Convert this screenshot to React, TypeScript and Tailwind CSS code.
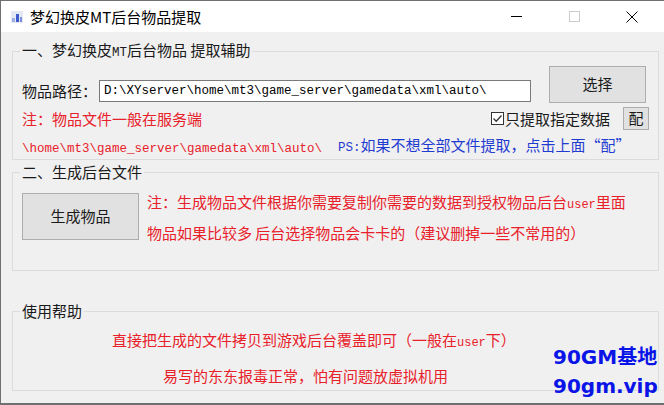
import React from "react";

const mono = "font-['Liberation_Mono','Noto_Sans_CJK_SC',monospace]";

function TitleIcon() {
  return (
    <svg width="12" height="12" viewBox="0 0 12 12">
      <rect x="0" y="0" width="12" height="12" fill="#e4e8f4" />
      <rect x="1" y="7" width="3" height="4" fill="#9fb0e0" />
      <rect x="5" y="3" width="3" height="8" fill="#3d5bd0" />
      <rect x="9" y="6" width="2" height="5" fill="#7a8fd8" />
    </svg>
  );
}

function CheckBox() {
  return (
    <svg width="13" height="13" viewBox="0 0 13 13">
      <rect x="0.5" y="0.5" width="12" height="12" fill="#ffffff" stroke="#333333" />
      <path d="M2.5 6.5 L5.2 9.2 L10.5 3.5" fill="none" stroke="#333333" strokeWidth="1.3" />
    </svg>
  );
}

export default function App() {
  const red = "text-[#e8202a]";
  return (
    <div className="relative w-[664px] h-[405px] overflow-hidden bg-[#f0f0f0] border-l border-t border-b-2 border-[#707070] font-['Noto_Sans_CJK_SC',sans-serif] text-[15px] text-[#1a1a1a] flex flex-col">
      {/* title bar */}
      <div className="h-[31px] bg-white flex items-center pl-[10px] pr-[3px] shrink-0">
        <TitleIcon />
        <span className="ml-[7px] leading-[20px] text-[15px] text-black">梦幻换皮MT后台物品提取</span>
        <div className="ml-auto flex h-full">
          <div className="w-[58px] h-full flex items-center justify-center">
            <div className="w-[11px] h-px bg-black" />
          </div>
          <div className="w-[58px] h-full flex items-center justify-center">
            <div className="w-[11px] h-[11px] border border-[#cccccc]" />
          </div>
          <div className="w-[58px] h-full flex items-center justify-center">
            <svg width="12" height="12" viewBox="0 0 12 12">
              <path d="M0.5 0.5 L11.5 11.5 M11.5 0.5 L0.5 11.5" stroke="#000" strokeWidth="1" />
            </svg>
          </div>
        </div>
      </div>

      {/* body */}
      <div className="flex flex-col pl-[11px]">
        {/* group 1 */}
        <fieldset className="mt-[8px] w-[647px] h-[120px] border border-[#dcdcdc] pl-[7px] pr-[12px]">
          <legend className="px-[2px] leading-[20px]">
            一、梦幻换皮<span className={`${mono} text-[12.5px]`}>MT</span>后台物品 提取辅助
          </legend>
          <div className="flex items-start mt-[3px] h-[37px]">
            <div className="flex items-center mt-[14px] ml-[2px]">
              <span className="leading-[22px] whitespace-nowrap">物品路径：</span>
              <div className={`ml-[2px] w-[432px] h-[22px] border border-[#7a7a7a] bg-white pl-[4px] leading-[20px] text-[12.5px] text-black ${mono} whitespace-nowrap overflow-hidden`}>
                D:\XYserver\home\mt3\game_server\gamedata\xml\auto\
              </div>
            </div>
            <div className="ml-auto w-[97px] h-[37px] border border-[#adadad] bg-[#e1e1e1] flex items-center justify-center">
              选择
            </div>
          </div>
          <div className="flex items-center mt-[4px] h-[23px]">
            <span className={`ml-[2px] leading-[20px] whitespace-nowrap ${red}`}>注：物品文件一般在服务端</span>
            <div className="ml-auto mr-[-3px] flex items-center">
              <CheckBox />
              <span className="ml-[1px] leading-[20px] whitespace-nowrap">只提取指定数据</span>
              <div className="ml-[13px] w-[26px] h-[23px] border border-[#adadad] bg-[#e1e1e1] flex items-center justify-center">
                配
              </div>
            </div>
          </div>
          <div className="flex items-start mt-[7px]">
            <span className={`ml-[2px] mt-[2px] w-[316px] leading-[20px] text-[12.5px] whitespace-nowrap ${mono} ${red}`}>
              \home\mt3\game_server\gamedata\xml\auto\
            </span>
            <span className="mt-[-2px] leading-[20px] whitespace-nowrap text-[#1f3bd0]">
              <span className={`${mono} text-[12.5px]`}>PS:</span>如果不想全部文件提取，点击上面“配”
            </span>
          </div>
        </fieldset>

        {/* group 2 */}
        <fieldset className="mt-[2px] w-[647px] h-[109px] border border-[#dcdcdc] pl-[7px] pr-[12px]">
          <legend className="px-[2px] leading-[20px]">二、生成后台文件</legend>
          <div className="flex items-start ml-[2px]">
            <div className="mt-[11px] w-[117px] h-[47px] shrink-0 border border-[#adadad] bg-[#e1e1e1] flex items-center justify-center">
              生成物品
            </div>
            <div className={`ml-[8px] mt-[6px] leading-[28px] whitespace-nowrap ${red}`}>
              <div>
                注：生成物品文件根据你需要复制你需要的数据到授权物品后台<span className={`${mono} text-[12px]`}>user</span>里面
              </div>
              <div>物品如果比较多 后台选择物品会卡卡的（建议删掉一些不常用的）</div>
            </div>
          </div>
        </fieldset>

        {/* group 3 */}
        <fieldset className="mt-[30px] w-[647px] h-[90px] border border-[#dcdcdc] pl-[7px] pr-[12px]">
          <legend className="px-[2px] leading-[20px]">使用帮助</legend>
          <div className={`mt-[7px] ml-[92px] leading-[24px] whitespace-nowrap ${red}`}>
            直接把生成的文件拷贝到游戏后台覆盖即可（一般在<span className={`${mono} text-[12px]`}>user</span>下）
          </div>
          <div className={`mt-[9px] ml-[143px] leading-[24px] whitespace-nowrap ${red}`}>
            易写的东东报毒正常，怕有问题放虚拟机用
          </div>
        </fieldset>
      </div>

      {/* watermark */}
      <div className="absolute left-[552px] top-[342px] font-['DejaVu_Sans','Noto_Sans_CJK_SC',sans-serif] font-bold text-[20px] leading-[29px] text-[#0a14e6] whitespace-nowrap">
        <div>90GM基地</div>
        <div>90gm.vip</div>
      </div>
    </div>
  );
}
